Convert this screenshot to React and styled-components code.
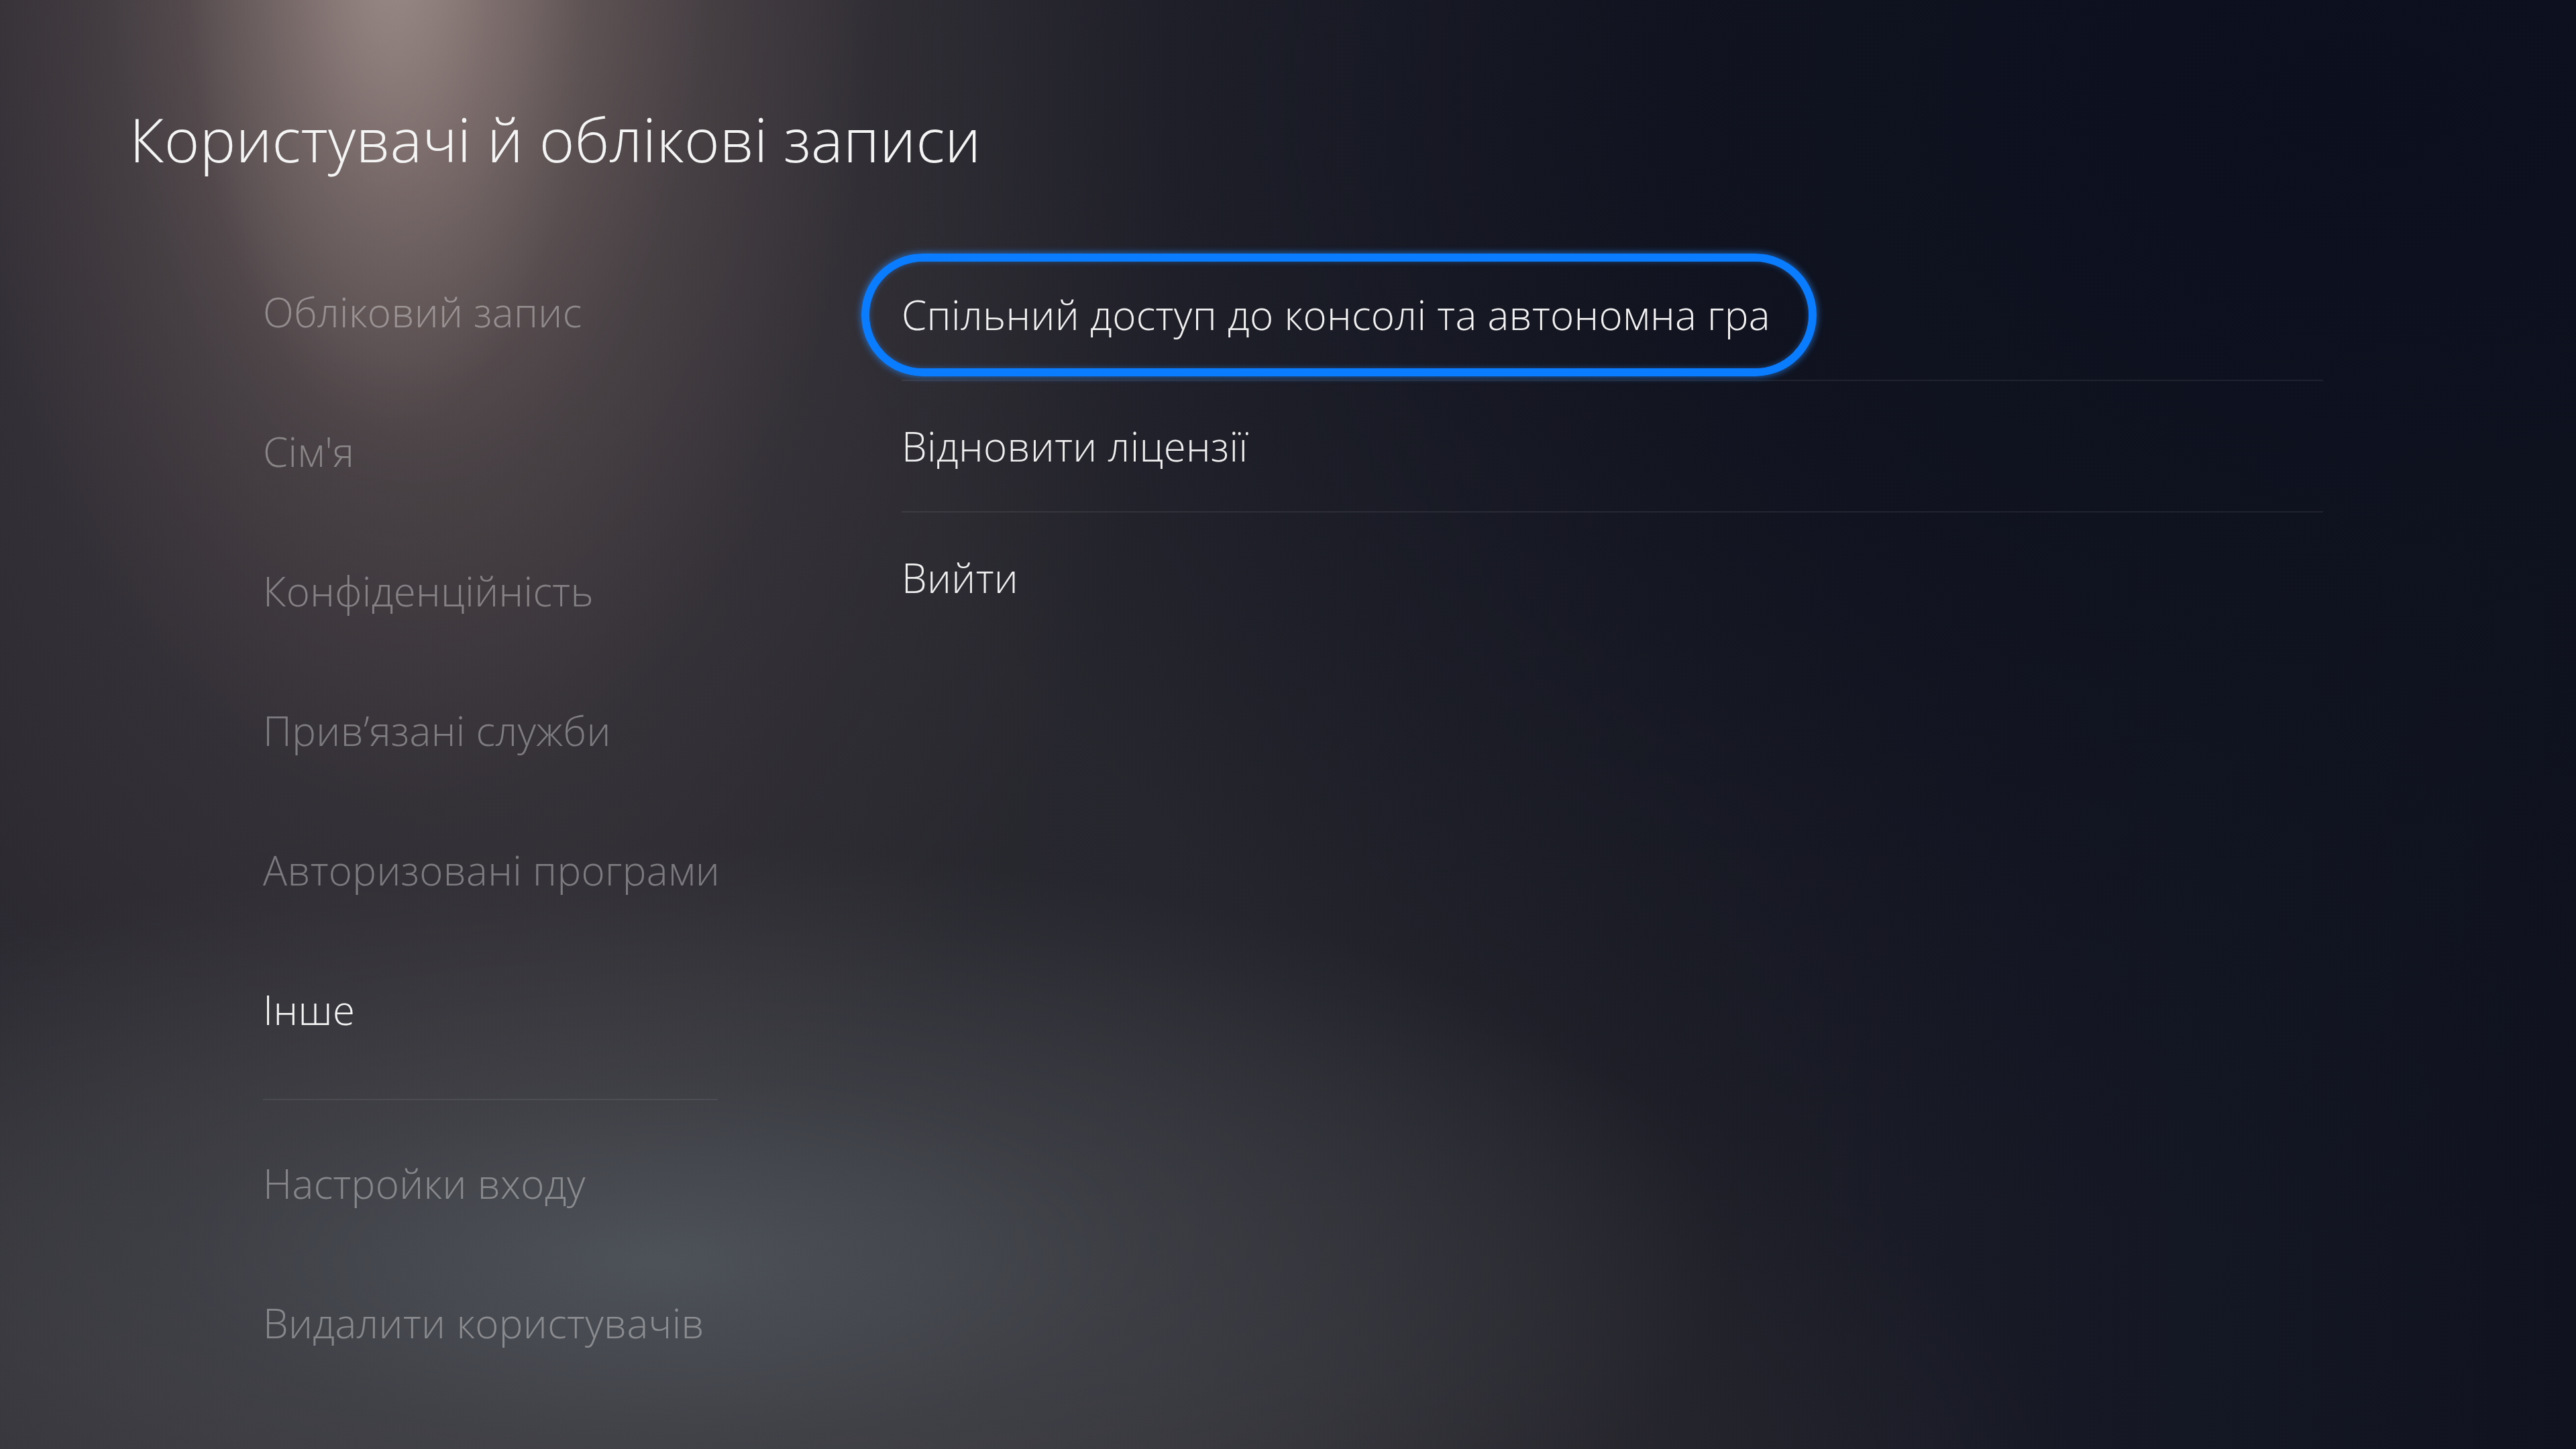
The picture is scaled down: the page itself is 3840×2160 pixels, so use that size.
import React from "react";
import styled, { createGlobalStyle } from "styled-components";

const GlobalStyle = createGlobalStyle`
  html, body {
    margin: 0;
    padding: 0;
    background: #1b1b22;
  }
  * { box-sizing: border-box; }
`;

const Screen = styled.div`
  position: relative;
  width: 3840px;
  height: 2160px;
  overflow: hidden;
  font-family: "Open Sans", "Noto Sans", sans-serif;
  font-weight: 300;
  color: #f2f2f2;
  padding: 162px 0 0 193px;
  background:
    radial-gradient(ellipse 300px 700px at 580px -60px, rgba(170,154,150,0.6) 0%, rgba(160,142,138,0.28) 50%, rgba(150,132,128,0) 100%),
    radial-gradient(ellipse 700px 1350px at 610px -140px, rgba(150,132,128,0.8) 0%, rgba(125,108,106,0.55) 35%, rgba(100,88,88,0.28) 65%, rgba(90,80,82,0) 100%),
    radial-gradient(ellipse 1100px 1700px at 650px 200px, rgba(88,76,78,0.6) 0%, rgba(80,70,74,0.3) 50%, rgba(70,64,70,0) 100%),
    radial-gradient(ellipse 1600px 620px at 980px 1880px, rgba(80,86,92,0.9) 0%, rgba(70,74,80,0.55) 45%, rgba(60,62,68,0) 100%),
    radial-gradient(ellipse 2300px 900px at 800px 2250px, rgba(62,58,64,0.9) 0%, rgba(52,50,56,0) 100%),
    radial-gradient(ellipse 2300px 1700px at 3500px 150px, rgba(12,15,30,1) 0%, rgba(14,17,30,0.85) 40%, rgba(20,22,32,0) 100%),
    linear-gradient(90deg, #2a2830 0%, #2b2a31 22%, #26262e 45%, #1d1e27 65%, #141724 85%, #10131f 100%);
`;

const Title = styled.h1`
  margin: 0;
  font-size: 90px;
  line-height: 90px;
  font-weight: 300;
  letter-spacing: 0.2px;
  color: #f4f4f4;
`;

const Columns = styled.div`
  display: flex;
  align-items: flex-start;
  margin-top: 109px;
  padding-left: 199px;
`;

const Nav = styled.nav`
  display: flex;
  flex-direction: column;
  width: 678px;
  flex: none;
`;

const NavItem = styled.div`
  height: 208px;
  display: flex;
  align-items: center;
  font-size: 60px;
  line-height: 60px;
  letter-spacing: 0.35px;
  white-space: nowrap;
  color: ${(p) => (p.$active ? "#f4f4f4" : "rgba(255,255,255,0.36)")};
`;

const NavDivider = styled.div`
  height: 2px;
  margin: 29px 0 20px;
  background: rgba(255,255,255,0.07);
`;

const List = styled.div`
  display: flex;
  flex-direction: column;
  width: 2119px;
  margin-left: 274px;
  margin-top: 11px;
`;

const Row = styled.div`
  height: 196px;
  display: flex;
  align-items: center;
  border-bottom: 2px solid ${(p) => (p.$last ? "transparent" : "rgba(255,255,255,0.075)")};
  font-size: 60px;
  line-height: 60px;
  letter-spacing: 0.35px;
  white-space: nowrap;
  color: #efefef;
`;

const FocusPill = styled.div`
  display: inline-flex;
  align-items: center;
  height: 183px;
  margin-left: -60px;
  padding: 0 57px 0 48px;
  border: 12px solid #0a7cff;
  border-radius: 92px;
  box-shadow: 0 0 10px 2px rgba(40, 140, 255, 0.55), inset 0 0 8px rgba(40, 140, 255, 0.45);
  color: #f2f2f2;
`;

const navItems = [
  "Обліковий запис",
  "Сім'я",
  "Конфіденційність",
  "Прив’язані служби",
  "Авторизовані програми",
  "Інше",
];

const navExtra = ["Настройки входу", "Видалити користувачів"];

export default function App() {
  return (
    <>
      <GlobalStyle />
      <Screen>
        <Title>Користувачі й облікові записи</Title>
        <Columns>
          <Nav>
            {navItems.map((t) => (
              <NavItem key={t} $active={t === "Інше"}>
                {t}
              </NavItem>
            ))}
            <NavDivider />
            {navExtra.map((t) => (
              <NavItem key={t}>{t}</NavItem>
            ))}
          </Nav>
          <List>
            <Row>
              <FocusPill>Спільний доступ до консолі та автономна гра</FocusPill>
            </Row>
            <Row>Відновити ліцензії</Row>
            <Row $last>Вийти</Row>
          </List>
        </Columns>
      </Screen>
    </>
  );
}
